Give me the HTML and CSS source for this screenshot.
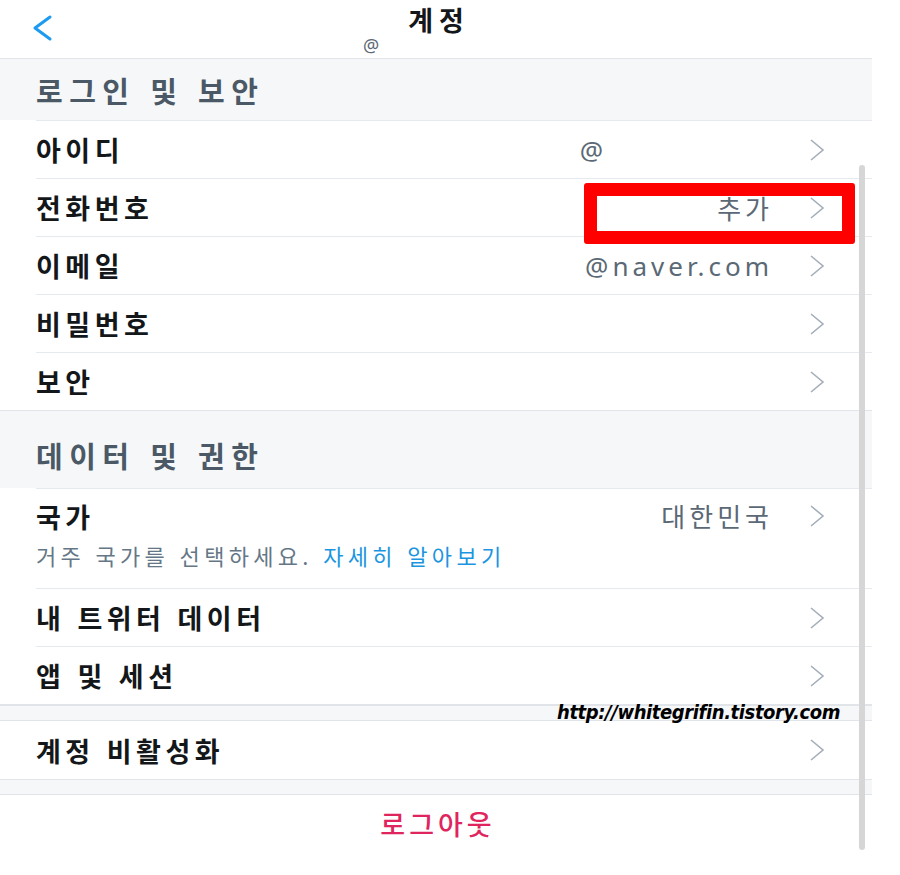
FILE: index.html
```html
<!DOCTYPE html>
<html lang="ko">
<head>
<meta charset="utf-8">
<title>계정</title>
<link rel="stylesheet" href="styles.css">
</head>
<body>
<div class="screen">
  <header class="topbar">
    <div class="back">
      <svg class="back-icon" width="24" height="28" viewBox="0 0 24 28"><polyline points="20,3 5,14 20,25" fill="none" stroke="#1d9bf0" stroke-width="3" stroke-linecap="round" stroke-linejoin="round"/></svg>
    </div>
    <div class="title-wrap">
      <div class="title">계정</div>
      <div class="handle">@</div>
    </div>
    <div class="spacer-col"></div>
  </header>

  <section class="group">
    <div class="group-head">로그인 및 보안</div>
    <ul class="list">
      <li class="row"><span class="label">아이디</span><span class="value value-handle">@</span><svg class="chev" width="16" height="26" viewBox="0 0 16 26"><polyline points="2,3 14,13 2,23" fill="none" stroke="#a4aeb8" stroke-width="1.6"/></svg></li>
      <li class="row"><span class="label">전화번호</span><span class="value">추가</span><svg class="chev" width="16" height="26" viewBox="0 0 16 26"><polyline points="2,3 14,13 2,23" fill="none" stroke="#a4aeb8" stroke-width="1.6"/></svg></li>
      <li class="row"><span class="label">이메일</span><span class="value">@naver.com</span><svg class="chev" width="16" height="26" viewBox="0 0 16 26"><polyline points="2,3 14,13 2,23" fill="none" stroke="#a4aeb8" stroke-width="1.6"/></svg></li>
      <li class="row"><span class="label">비밀번호</span><svg class="chev" width="16" height="26" viewBox="0 0 16 26"><polyline points="2,3 14,13 2,23" fill="none" stroke="#a4aeb8" stroke-width="1.6"/></svg></li>
      <li class="row"><span class="label">보안</span><svg class="chev" width="16" height="26" viewBox="0 0 16 26"><polyline points="2,3 14,13 2,23" fill="none" stroke="#a4aeb8" stroke-width="1.6"/></svg></li>
    </ul>
  </section>

  <section class="group">
    <div class="group-head group-head-tall">데이터 및 권한</div>
    <ul class="list">
      <li class="row row-tall">
        <div class="row-main"><span class="label">국가</span><span class="value">대한민국</span><svg class="chev" width="16" height="26" viewBox="0 0 16 26"><polyline points="2,3 14,13 2,23" fill="none" stroke="#a4aeb8" stroke-width="1.6"/></svg></div>
        <div class="row-note">거주 국가를 선택하세요. <a class="link">자세히 알아보기</a></div>
      </li>
      <li class="row"><span class="label">내 트위터 데이터</span><svg class="chev" width="16" height="26" viewBox="0 0 16 26"><polyline points="2,3 14,13 2,23" fill="none" stroke="#a4aeb8" stroke-width="1.6"/></svg></li>
      <li class="row"><span class="label">앱 및 세션</span><svg class="chev" width="16" height="26" viewBox="0 0 16 26"><polyline points="2,3 14,13 2,23" fill="none" stroke="#a4aeb8" stroke-width="1.6"/></svg></li>
    </ul>
  </section>

  <div class="gap"></div>

  <ul class="list">
    <li class="row row-first"><span class="label">계정 비활성화</span><svg class="chev" width="16" height="26" viewBox="0 0 16 26"><polyline points="2,3 14,13 2,23" fill="none" stroke="#a4aeb8" stroke-width="1.6"/></svg></li>
  </ul>

  <div class="gap"></div>

  <div class="logout">로그아웃</div>

  <div class="watermark">http://whitegrifin.tistory.com</div>
  <div class="highlight"></div>
  <div class="scrollbar"></div>
</div>
</body>
</html>
```

FILE: styles.css
```css
* { box-sizing: border-box; }

html, body {
  margin: 0;
  padding: 0;
  background: #ffffff;
}

body {
  font-family: "Noto Sans CJK KR", "Noto Sans", sans-serif;
  color: #14171a;
}

.screen {
  position: relative;
  width: 872px;
  height: 875px;
}

/* top bar */
.topbar {
  display: grid;
  grid-template-columns: 1fr auto 1fr;
  height: 59px;
  border-bottom: 1px solid #e1e5ea;
}

.back {
  padding: 14px 0 0 30px;
}

.back-icon { display: block; }

.title-wrap {
  display: flex;
  flex-direction: column;
  align-items: center;
}

.title {
  margin-top: 4px;
  font-size: 27px;
  font-weight: 700;
  line-height: 31px;
  letter-spacing: 6px;
  padding-left: 6px;
  color: #14171a;
}

.handle {
  margin-top: 1px;
  margin-right: 130px;
  font-family: "Noto Sans", sans-serif;
  font-size: 18px;
  line-height: 18px;
  color: #5b6875;
}

/* groups */
.group {
  border-bottom: 1px solid #e1e5ea;
}

.group-head {
  display: flex;
  align-items: center;
  height: 61px;
  padding-left: 36px;
  background: #f5f7f9;
  font-size: 29px;
  font-weight: 700;
  letter-spacing: 6.5px;
  color: #4b5866;
}

.group-head-tall {
  height: 77px;
  align-items: flex-end;
  padding-bottom: 12px;
}

.list {
  list-style: none;
  margin: 0;
  padding: 0;
}

.row {
  display: flex;
  align-items: center;
  height: 58px;
  margin-left: 36px;
  padding-right: 47px;
  border-top: 1px solid #e6eaee;
}

.row-first { border-top: none; }

.label {
  flex: 1;
  font-size: 27px;
  font-weight: 700;
  letter-spacing: 4.5px;
  color: #14171a;
  white-space: nowrap;
}

.value {
  font-family: "Noto Sans", "Noto Sans CJK KR", sans-serif;
  font-size: 26px;
  letter-spacing: 4px;
  color: #5b6875;
}

.value-handle {
  padding-right: 166px;
}

.chev {
  display: block;
  margin-left: 36px;
  flex: none;
}

.row-tall {
  display: block;
  height: 100px;
  padding-right: 0;
}

.row-main {
  display: flex;
  align-items: center;
  height: 54px;
  padding-right: 47px;
}

.row-note {
  margin-top: -2px;
  font-size: 22px;
  line-height: 28px;
  letter-spacing: 4.3px;
  color: #657786;
}

.link {
  color: #1b95e0;
}

/* grey gaps */
.gap {
  height: 16px;
  background: #f5f7f9;
  border-top: 1px solid #e1e5ea;
  border-bottom: 1px solid #e1e5ea;
}

.logout {
  padding-top: 12px;
  text-align: center;
  font-size: 27px;
  font-weight: 500;
  line-height: 34px;
  letter-spacing: 4px;
  padding-left: 4px;
  color: #e0245e;
}

/* overlays */
.watermark {
  position: absolute;
  left: 557px;
  top: 700px;
  font-family: "Liberation Sans Narrow", "DejaVu Sans Condensed", sans-serif;
  font-stretch: condensed;
  font-size: 20px;
  font-weight: 700;
  font-style: italic;
  letter-spacing: -0.4px;
  color: #000000;
  white-space: nowrap;
}

.highlight {
  position: absolute;
  left: 584px;
  top: 183px;
  width: 271px;
  height: 61px;
  border: 13px solid #ff0000;
  border-radius: 3px;
}

.scrollbar {
  position: absolute;
  left: 859px;
  top: 165px;
  width: 6px;
  height: 685px;
  border-radius: 3px;
  background: #d6d6d6;
}
```
